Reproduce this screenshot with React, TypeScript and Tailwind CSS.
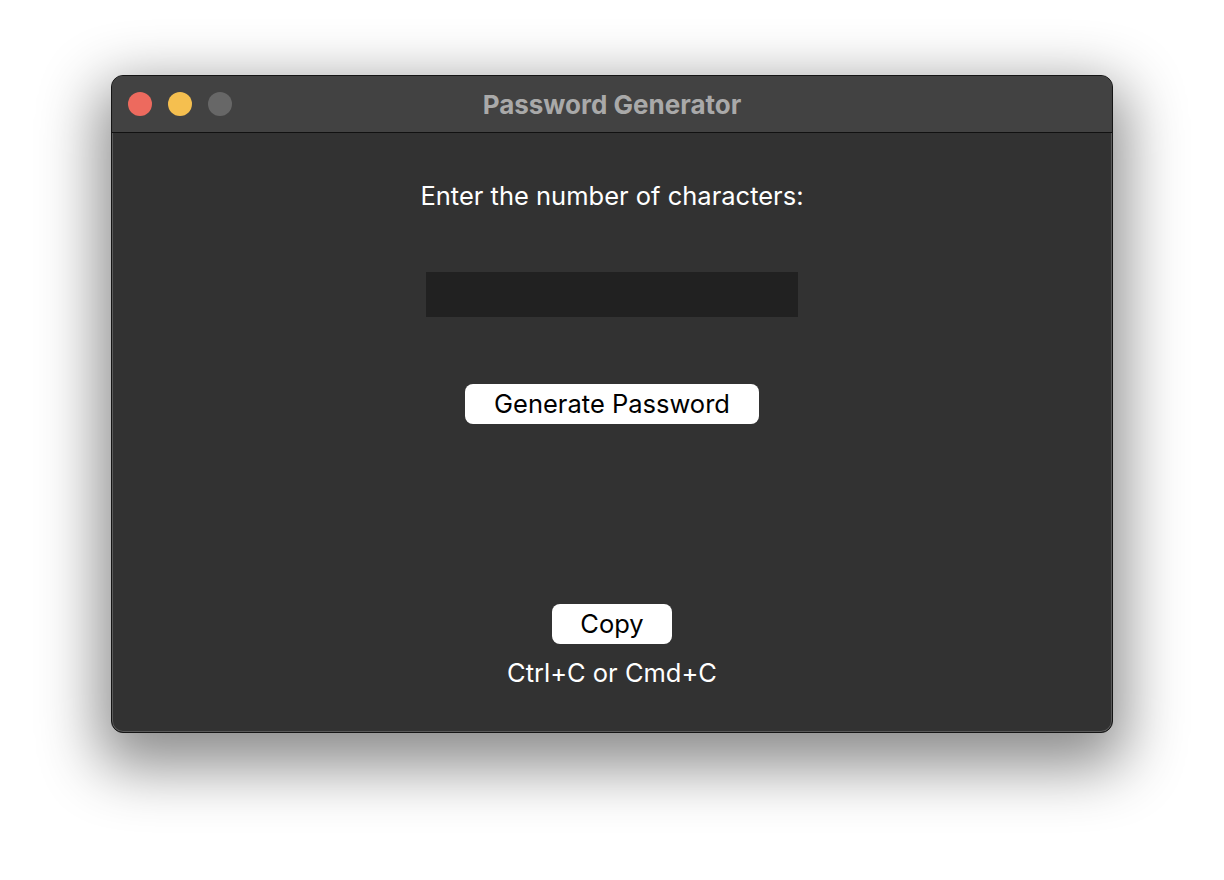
import React from "react";

export default function App() {
  return (
    <div className="w-[1224px] h-[880px] bg-white pl-[111px] pt-[75px]" style={{ fontFamily: "Inter, 'Noto Sans', sans-serif" }}>
      <div className="w-[1002px] h-[658px] rounded-[12px] border border-[#151515] bg-[#323232] overflow-hidden flex flex-col shadow-[0_22px_60px_12px_rgba(0,0,0,0.45)] ring-1 ring-inset ring-[#5a5a5a]">
        <div className="relative h-[57px] bg-[#424242] border-b border-[#111111] flex items-center shrink-0">
          <div className="flex gap-[16px] pl-[16px]">
            <div className="w-[24px] h-[24px] rounded-full bg-[#ed6a5e]" />
            <div className="w-[24px] h-[24px] rounded-full bg-[#f5bf4f]" />
            <div className="w-[24px] h-[24px] rounded-full bg-[#676767]" />
          </div>
          <div className="absolute inset-0 flex items-center justify-center text-[26px] font-bold text-[#a9a9a9]">
            Password Generator
          </div>
        </div>
        <div className="flex flex-col items-center text-white">
          <div className="mt-[49px] text-[25.5px] leading-[28px]">Enter the number of characters:</div>
          <div className="mt-[62px] w-[372px] h-[45px] bg-[#212121]" />
          <button className="mt-[67px] w-[294px] h-[40px] rounded-[8px] bg-white text-black text-[25.5px] leading-[40px]">Generate Password</button>
          <button className="mt-[180px] w-[120px] h-[40px] rounded-[8px] bg-white text-black text-[25.5px] leading-[40px]">Copy</button>
          <div className="mt-[15px] text-[25.5px] leading-[28px]">Ctrl+C or Cmd+C</div>
        </div>
      </div>
    </div>
  );
}
